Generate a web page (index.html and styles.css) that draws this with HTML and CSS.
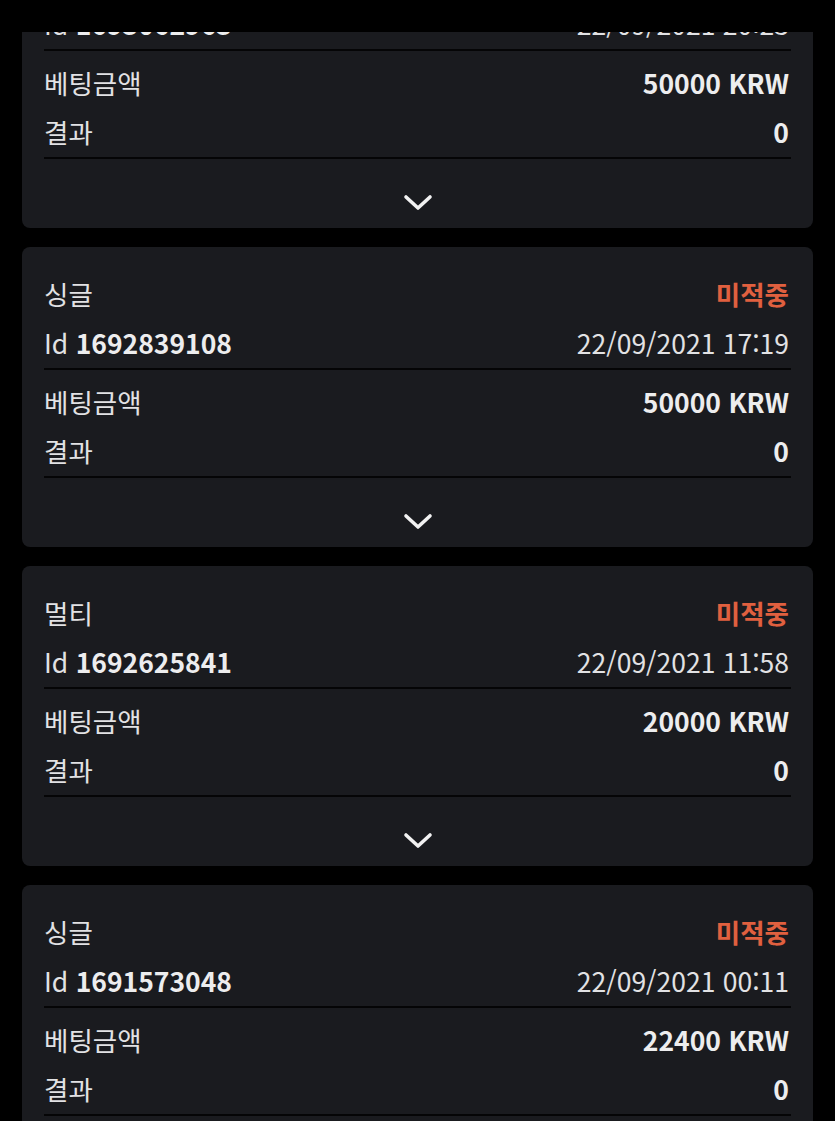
FILE: index.html
```html
<!DOCTYPE html>
<html lang="ko">
<head>
<meta charset="utf-8">
<title>베팅내역</title>
<link rel="stylesheet" href="styles.css">
</head>
<body>
<div class="topbar"></div>
<div class="viewport">
  <div class="list">
    <div class="card">
      <div class="row"><span class="label">싱글</span><span class="status">미적중</span></div>
      <div class="row"><span class="label">Id <b>1693062963</b></span><span class="label">22/09/2021 20:23</span></div>
      <div class="divider"></div>
      <div class="row first"><span class="label">베팅금액</span><span class="value">50000 KRW</span></div>
      <div class="row"><span class="label">결과</span><span class="value">0</span></div>
      <div class="divider"></div>
      <div class="toggle"><svg width="30" height="18" viewBox="0 0 30 18"><path d="M3 3 L15 14 L27 3" fill="none" stroke="#f2f2f2" stroke-width="3.6" stroke-linecap="round" stroke-linejoin="round"/></svg></div>
    </div>
    <div class="card">
      <div class="row"><span class="label">싱글</span><span class="status">미적중</span></div>
      <div class="row"><span class="label">Id <b>1692839108</b></span><span class="label">22/09/2021 17:19</span></div>
      <div class="divider"></div>
      <div class="row first"><span class="label">베팅금액</span><span class="value">50000 KRW</span></div>
      <div class="row"><span class="label">결과</span><span class="value">0</span></div>
      <div class="divider"></div>
      <div class="toggle"><svg width="30" height="18" viewBox="0 0 30 18"><path d="M3 3 L15 14 L27 3" fill="none" stroke="#f2f2f2" stroke-width="3.6" stroke-linecap="round" stroke-linejoin="round"/></svg></div>
    </div>
    <div class="card">
      <div class="row"><span class="label">멀티</span><span class="status">미적중</span></div>
      <div class="row"><span class="label">Id <b>1692625841</b></span><span class="label">22/09/2021 11:58</span></div>
      <div class="divider"></div>
      <div class="row first"><span class="label">베팅금액</span><span class="value">20000 KRW</span></div>
      <div class="row"><span class="label">결과</span><span class="value">0</span></div>
      <div class="divider"></div>
      <div class="toggle"><svg width="30" height="18" viewBox="0 0 30 18"><path d="M3 3 L15 14 L27 3" fill="none" stroke="#f2f2f2" stroke-width="3.6" stroke-linecap="round" stroke-linejoin="round"/></svg></div>
    </div>
    <div class="card">
      <div class="row"><span class="label">싱글</span><span class="status">미적중</span></div>
      <div class="row"><span class="label">Id <b>1691573048</b></span><span class="label">22/09/2021 00:11</span></div>
      <div class="divider"></div>
      <div class="row first"><span class="label">베팅금액</span><span class="value">22400 KRW</span></div>
      <div class="row"><span class="label">결과</span><span class="value">0</span></div>
      <div class="divider"></div>
      <div class="toggle"><svg width="30" height="18" viewBox="0 0 30 18"><path d="M3 3 L15 14 L27 3" fill="none" stroke="#f2f2f2" stroke-width="3.6" stroke-linecap="round" stroke-linejoin="round"/></svg></div>
    </div>
  </div>
</div>
</body>
</html>
```
FILE: styles.css
```css
html, body {
  margin: 0;
  padding: 0;
  background: #000;
  height: 100%;
  overflow: hidden;
}
body {
  font-family: "Noto Sans CJK KR", "Noto Sans", sans-serif;
  color: #e4e4e6;
}
.topbar {
  height: 32px;
  background: #000;
}
.viewport {
  height: calc(100vh - 32px);
  overflow: hidden;
}
.list {
  display: flex;
  flex-direction: column;
  gap: 19px;
  padding: 0 22px;
  margin-top: -104px;
}
.card {
  background: #1a1b1f;
  border-radius: 8px;
  padding: 23px 22px 0;
  height: 300px;
  box-sizing: border-box;
  display: flex;
  flex-direction: column;
}
.row {
  height: 49px;
  flex: none;
  display: flex;
  justify-content: space-between;
  align-items: center;
  padding-right: 2px;
  font-size: 26.5px;
  line-height: 1;
}
.row.first {
  margin-top: 8px;
}
.label {
  color: #e2e2e4;
}
.label b {
  font-weight: 700;
  color: #ededee;
}
.value {
  font-weight: 700;
  color: #ededee;
}
.status {
  font-weight: 700;
  color: #e0603f;
}
.divider {
  height: 2px;
  flex: none;
  background: #050506;
}
.toggle {
  flex: 1;
  display: flex;
  justify-content: center;
  align-items: center;
  padding-top: 19px;
}
.toggle svg {
  display: block;
}
```
